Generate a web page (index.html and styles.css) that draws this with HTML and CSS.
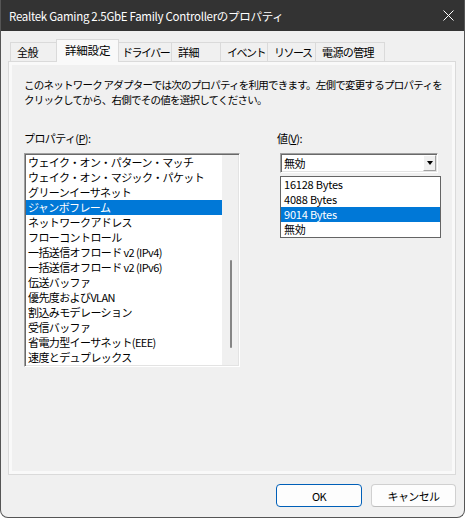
FILE: index.html
```html
<!DOCTYPE html>
<html>
<head>
  <meta charset="UTF-8" />
  <title>Realtek Gaming 2.5GbE Family Controllerのプロパティ</title>
  <link rel="stylesheet" href="styles.css">
</head>
<body>
<div class="window">
  <div class="titlebar">
    <span class="title">Realtek Gaming 2.5GbE Family Controllerのプロパティ</span>
    <svg class="close" width="11" height="11" viewBox="0 0 11 11">
      <path d="M0.5 0.5 L10.5 10.5 M10.5 0.5 L0.5 10.5" stroke="#fff" stroke-width="1" fill="none" />
    </svg>
  </div>

  <div class="content">
    <div class="tabs">
      <div class="tab">全般</div>
      <div class="tab active">詳細設定</div>
      <div class="tab narrow driver">ドライバー</div>
      <div class="tab">詳細</div>
      <div class="tab narrow">イベント</div>
      <div class="tab narrow">リソース</div>
      <div class="tab">電源の管理</div>
    </div>

    <div class="panel">
      <div class="page">
        <p class="desc">このネットワーク アダプターでは次のプロパティを利用できます。左側で変更するプロパティを<br>クリックしてから、右側でその値を選択してください。</p>

        <div class="props">
          <div class="col-left">
            <div class="label">プロパティ(<u>P</u>):</div>
            <div class="listbox">
              <div class="items">
                <div class="item">ウェイク・オン・パターン・マッチ</div>
                <div class="item">ウェイク・オン・マジック・パケット</div>
                <div class="item">グリーンイーサネット</div>
                <div class="item selected">ジャンボフレーム</div>
                <div class="item">ネットワークアドレス</div>
                <div class="item">フローコントロール</div>
                <div class="item">一括送信オフロード v2 (IPv4)</div>
                <div class="item">一括送信オフロード v2 (IPv6)</div>
                <div class="item">伝送バッファ</div>
                <div class="item">優先度およびVLAN</div>
                <div class="item">割込みモデレーション</div>
                <div class="item">受信バッファ</div>
                <div class="item">省電力型イーサネット(EEE)</div>
                <div class="item">速度とデュプレックス</div>
              </div>
              <div class="scrollbar"><div class="thumb"></div></div>
            </div>
          </div>

          <div class="col-right">
            <div class="label">値(<u>V</u>):</div>
            <div class="combo">
              <span class="combo-text">無効</span>
              <span class="combo-btn"><span class="arrow"></span></span>
            </div>
            <div class="dropdown">
              <div class="option">16128 Bytes</div>
              <div class="option">4088 Bytes</div>
              <div class="option selected">9014 Bytes</div>
              <div class="option">無効</div>
            </div>
          </div>
        </div>
      </div>
    </div>

    <div class="buttons">
      <button class="btn default">OK</button>
      <button class="btn">キャンセル</button>
    </div>
  </div>
</div>
</body>
</html>
```

FILE: styles.css
```css
body {
  margin: 0;
  background: #fff;
  font-family: "Noto Sans CJK JP", "Noto Sans CJK SC", sans-serif;
  font-size: 11px;
  letter-spacing: -0.6px;
  color: #000;
}

.window {
  width: 465px;
  height: 518px;
  box-sizing: border-box;
  background: #f0f0f0;
  border: 1px solid #555;
  border-top: none;
  border-radius: 0 0 8px 8px;
  overflow: hidden;
  display: flex;
  flex-direction: column;
}

.titlebar {
  height: 31px;
  flex: none;
  background: #333;
  color: #fff;
  font-size: 11.5px;
  letter-spacing: -0.3px;
  display: flex;
  align-items: center;
  justify-content: space-between;
  padding: 0 10px 0 8px;
}

.content {
  flex: 1;
  padding: 8px 8px 0 7px;
  display: flex;
  flex-direction: column;
}

/* タブ */
.tabs {
  display: grid;
  grid-template-columns: 47px 62px 53px 49px 47px 48px 69px;
  align-items: end;
  height: 22px;
  margin-left: 2px;
}

.tab {
  height: 19px;
  box-sizing: border-box;
  padding-left: 6px;
  line-height: 18px;
  border: 1px solid #dadada;
  border-bottom: none;
  border-left: none;
  background: #f0f0f0;
  white-space: nowrap;
  overflow: hidden;
}

.tab:first-child {
  border-left: 1px solid #dadada;
}

.tab.narrow {
  letter-spacing: -1.5px;
}

.tab.driver {
  padding-left: 3px;
}

.tab.active {
  height: 23px;
  line-height: 21px;
  padding-left: 8px;
  margin-bottom: -1px;
  margin-left: -1px;
  border-left: 1px solid #dadada;
  background: #f9f9f9;
  font-size: 11.5px;
  letter-spacing: -0.2px;
  position: relative;
  z-index: 1;
}

.panel {
  height: 414px;
  box-sizing: border-box;
  border: 1px solid #dadada;
  background: #f9f9f9;
  padding: 3px;
}

.page {
  height: 100%;
  box-sizing: border-box;
  background: #f0f0f0;
  padding: 12px 0 0 12px;
}

.desc {
  margin: 0;
  font-size: 10.5px;
  letter-spacing: -0.75px;
  line-height: 15px;
  white-space: nowrap;
}

.props {
  display: flex;
  margin-top: 24px;
}

.col-left {
  width: 216px;
}

.col-right {
  margin-left: 37px;
}

.label {
  line-height: 15px;
  margin-bottom: 7px;
}

/* リストボックス */
.listbox {
  height: 214px;
  box-sizing: border-box;
  border: 1px solid;
  border-color: #a0a0a0 #fff #fff #a0a0a0;
  box-shadow: inset 1px 1px #696969, inset -1px -1px #e3e3e3;
  padding: 1px;
  background: #fff;
  display: flex;
}

.items {
  flex: 1;
  overflow: hidden;
}

.item {
  height: 15px;
  line-height: 15px;
  padding-left: 2px;
  white-space: nowrap;
}

.item.selected,
.option.selected {
  background: #0078d7;
  color: #fff;
}

.scrollbar {
  width: 16px;
  box-sizing: border-box;
  background: #f0f0f0;
  padding-top: 105px;
}

.thumb {
  width: 2px;
  height: 88px;
  margin-left: 8px;
  background: #858585;
  border-radius: 1px;
}

/* コンボボックス */
.combo {
  width: 158px;
  height: 20px;
  box-sizing: border-box;
  margin-left: 3px;
  border: 1px solid;
  border-color: #a0a0a0 #fff #fff #a0a0a0;
  box-shadow: inset 1px 1px #696969, inset -1px -1px #e3e3e3;
  padding: 1px;
  background: #fff;
  display: flex;
  align-items: stretch;
}

.combo-text {
  flex: 1;
  padding-left: 2px;
  line-height: 16px;
}

.combo-btn {
  width: 13px;
  box-sizing: border-box;
  background: #f0f0f0;
  border: 1px solid;
  border-color: #fff #a0a0a0 #a0a0a0 #fff;
  display: flex;
  align-items: center;
  justify-content: center;
}

.arrow {
  width: 0;
  height: 0;
  border-left: 3px solid transparent;
  border-right: 3px solid transparent;
  border-top: 4px solid #000;
}

.dropdown {
  width: 161px;
  box-sizing: border-box;
  margin: 3px 0 0 3px;
  border: 1px solid #646464;
  background: #fff;
  letter-spacing: -0.2px;
}

.option {
  height: 15px;
  line-height: 15px;
  padding-left: 3px;
}

/* ボタン */
.buttons {
  display: flex;
  justify-content: flex-end;
  gap: 9px;
  margin-top: 9px;
}

.btn {
  width: 86px;
  height: 23px;
  box-sizing: border-box;
  padding: 0;
  font: inherit;
  letter-spacing: inherit;
  color: #000;
  background: #fdfdfd;
  border: 1px solid #d0d0d0;
  border-bottom-color: #bcbcbc;
  border-radius: 4px;
}

.btn + .btn {
  width: 85px;
}

.btn.default {
  border-color: #005fb8;
}
```
